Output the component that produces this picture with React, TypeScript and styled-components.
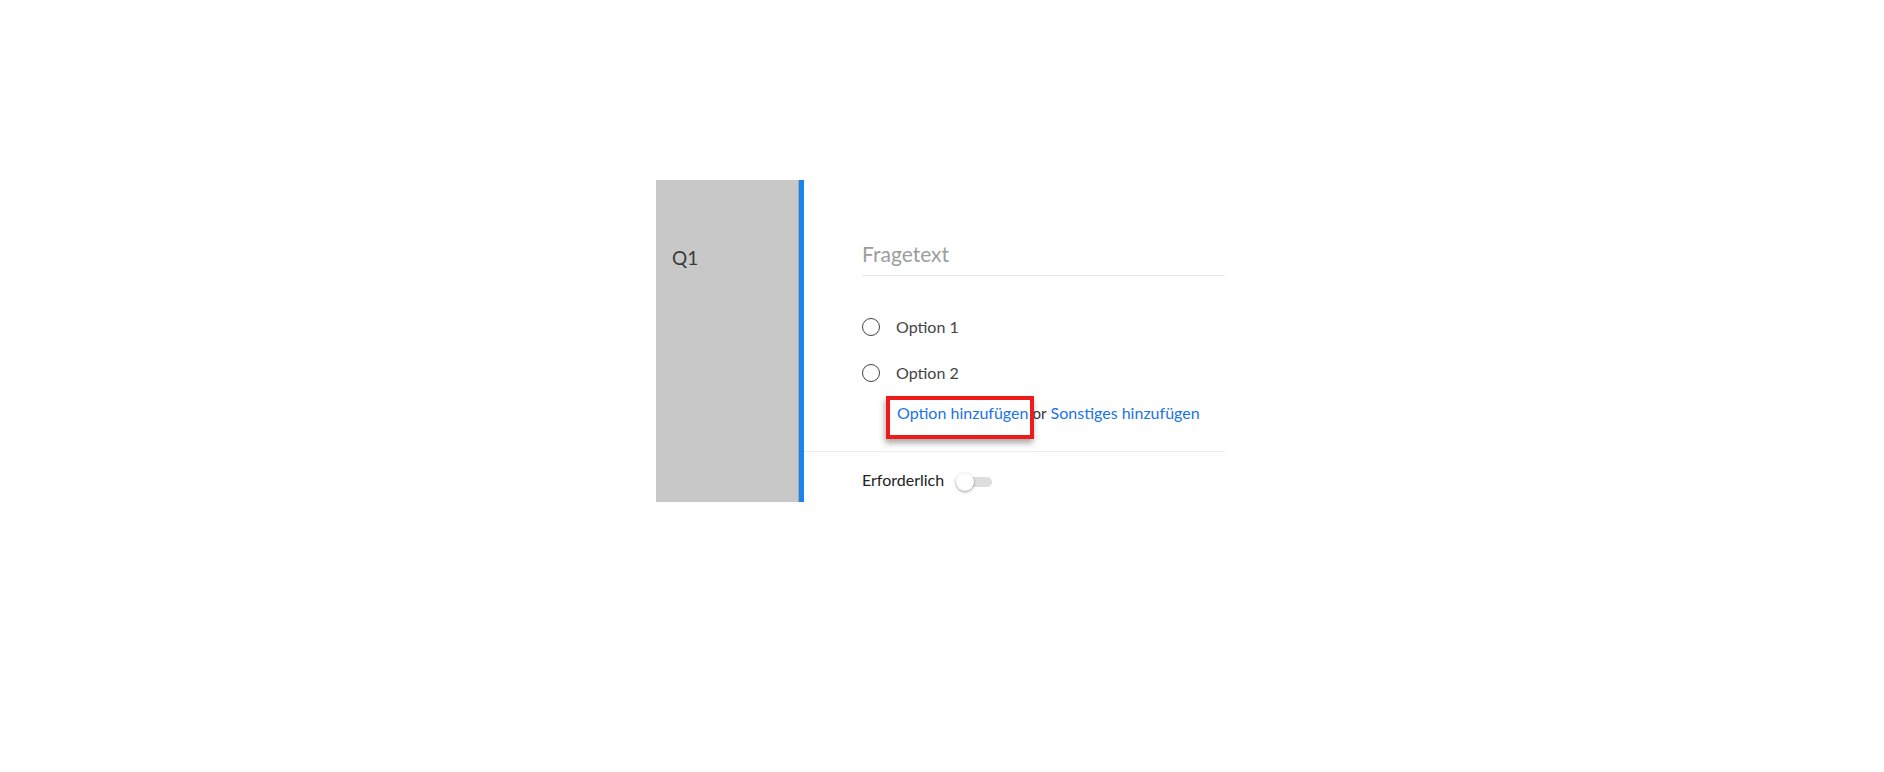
import styled, { createGlobalStyle } from "styled-components"

const GlobalStyle = createGlobalStyle`
  html, body {
    margin: 0;
    padding: 0;
    background: #ffffff;
  }
  body {
    font-family: Lato, "Open Sans", "Liberation Sans", sans-serif;
    color: #333;
  }
`

const Page = styled.div`
  width: 1884px;
  height: 772px;
  padding: 180px 0 0 656px;
  box-sizing: border-box;
`

const QuestionCard = styled.div`
  display: flex;
  height: 322px;
  width: 570px;
`

const NumberColumn = styled.div`
  width: 143px;
  background: #c8c8c8;
  border-right: 1px solid #a8a8a8;
  padding: 63px 0 0 16px;
  box-sizing: border-box;
  font-size: 19px;
  line-height: 30px;
  color: #3a3a3a;
`

const Editor = styled.div`
  width: 421px;
  border-left: 5px solid #1a84f0;
  display: flex;
  flex-direction: column;
`

const Body = styled.div`
  padding: 59px 0 0 58px;
  display: flex;
  flex-direction: column;
`

const QuestionInput = styled.input`
  font-family: inherit;
  font-size: 21px;
  line-height: 30px;
  height: 30px;
  padding: 0 0 6px 0;
  border: none;
  border-bottom: 1px solid #e6e6e6;
  outline: none;
  color: #333;
  background: transparent;

  &::placeholder {
    color: #9d9d9d;
  }
`

const OptionList = styled.div`
  display: flex;
  flex-direction: column;
  gap: 16px;
  margin-top: 35px;
`

const OptionRow = styled.label`
  display: flex;
  align-items: center;
  gap: 16px;
  height: 30px;
  font-size: 16px;
  color: #444;
`

const Radio = styled.span`
  width: 16px;
  height: 16px;
  margin-top: 1px;
  border: 1.5px solid #444;
  border-radius: 50%;
  flex-shrink: 0;
`

const AddRow = styled.div`
  margin: 11px 0 0 35px;
  height: 30px;
  line-height: 30px;
  font-size: 16px;
`

const AddLink = styled.a<{ $highlighted?: boolean }>`
  position: relative;
  color: #1a73e8;
  text-decoration: none;
  cursor: pointer;

  ${({ $highlighted }) =>
    $highlighted &&
    `
    &::after {
      content: "";
      position: absolute;
      left: -11px;
      right: -6px;
      top: -7px;
      bottom: -17px;
      border: 4px solid #ee1b1b;
      box-shadow: -1px 4px 6px rgba(0, 0, 0, 0.35);
      pointer-events: none;
    }
  `}
`

const Or = styled.span`
  font-size: 15px;
  color: #333;
`

const Divider = styled.div`
  margin-top: 23px;
  border-top: 1px solid #ececec;
`

const Footer = styled.div`
  display: flex;
  align-items: center;
  gap: 12px;
  padding: 13px 0 0 58px;
  height: 30px;
`

const RequiredLabel = styled.span`
  font-size: 16px;
  line-height: 30px;
  color: #222;
`

const Toggle = styled.span`
  position: relative;
  width: 36px;
  height: 10px;
  margin-top: 3px;
  border-radius: 5px;
  background: #dedede;
`

const Knob = styled.span`
  position: absolute;
  left: 0;
  top: -4px;
  width: 18px;
  height: 18px;
  border-radius: 50%;
  background: #fff;
  box-shadow: 0 1px 3px rgba(0, 0, 0, 0.4);
`

const options = ["Option 1", "Option 2"]

export default function App() {
  return (
    <>
      <GlobalStyle />
      <Page>
        <QuestionCard>
          <NumberColumn>Q1</NumberColumn>
          <Editor>
            <Body>
              <QuestionInput placeholder="Fragetext" />
              <OptionList>
                {options.map(option => (
                  <OptionRow key={option}>
                    <Radio />
                    {option}
                  </OptionRow>
                ))}
              </OptionList>
              <AddRow>
                <AddLink $highlighted>Option hinzufügen</AddLink> <Or>or</Or>{" "}
                <AddLink>Sonstiges hinzufügen</AddLink>
              </AddRow>
            </Body>
            <Divider />
            <Footer>
              <RequiredLabel>Erforderlich</RequiredLabel>
              <Toggle>
                <Knob />
              </Toggle>
            </Footer>
          </Editor>
        </QuestionCard>
      </Page>
    </>
  )
}
